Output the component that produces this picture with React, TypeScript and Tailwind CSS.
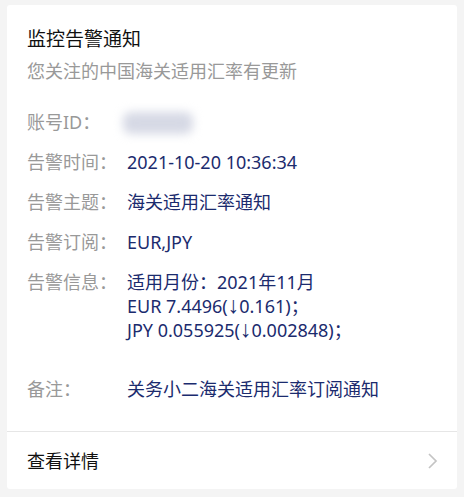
import React from "react";

const font = { fontFamily: '"Noto Sans", "Noto Sans CJK SC", sans-serif' };
const arrowFont = { fontFamily: '"Liberation Sans", "DejaVu Sans", sans-serif' };

function Row({ label, children, className = "" }: { label: string; children: React.ReactNode; className?: string }) {
  return (
    <div className={`flex text-[18px] leading-[26px] ${className}`}>
      <div className="w-[100px] shrink-0 text-[#999999]">{label}</div>
      <div className="text-[#1b2b6e]">{children}</div>
    </div>
  );
}

function Down() {
  return (
    <span className="text-[23px] leading-[0] text-[#1b2b6e]" style={arrowFont}>
      {"\u2193\uFE0E"}
    </span>
  );
}

export default function App() {
  return (
    <div className="min-h-[497px] w-[464px] bg-[#f4f4f4] pt-[5px]" style={font}>
      <div className="ml-[7px] w-[450px] rounded-[3px] bg-white">
        <div className="px-[20px] pt-[21px] pb-[29px]">
          <div className="text-[19px] leading-[26px] text-[#111111]">监控告警通知</div>
          <div className="mt-[6px] text-[18px] leading-[26px] text-[#999999]">您关注的中国海关适用汇率有更新</div>
          <Row label="账号ID：" className="mt-[25px]">
            <div className="ml-[-4px] mt-[3px] h-[22px] w-[70px] rounded-[8px] bg-[#d6d9e5] blur-[5px]" />
          </Row>
          <Row label="告警时间：" className="mt-[14px]">2021-10-20 10:36:34</Row>
          <Row label="告警主题：" className="mt-[14px]">海关适用汇率通知</Row>
          <Row label="告警订阅：" className="mt-[14px]">EUR,JPY</Row>
          <div className="mt-[15px] flex text-[18px] leading-[24px]">
            <div className="w-[100px] shrink-0 text-[#999999]">告警信息：</div>
            <div className="text-[#1b2b6e]">
              <div className="h-[24px]">适用月份：2021年11月</div>
              <div className="h-[24px]">
                EUR 7.4496(<Down />0.161)；
              </div>
              <div className="h-[24px]">
                JPY 0.055925(<Down />0.002848)；
              </div>
            </div>
          </div>
          <Row label="备注：" className="mt-[34px]">关务小二海关适用汇率订阅通知</Row>
        </div>
        <div className="flex h-[58px] items-center justify-between border-t border-[#e6e6e6] pl-[20px] pr-[19px]">
          <span className="text-[18px] leading-[26px] text-[#111111]">查看详情</span>
          <svg width="11" height="18" viewBox="0 0 11 18" fill="none">
            <path d="M2 2 L9 9 L2 16" stroke="#c4c4c4" strokeWidth="1.7" />
          </svg>
        </div>
      </div>
    </div>
  );
}
